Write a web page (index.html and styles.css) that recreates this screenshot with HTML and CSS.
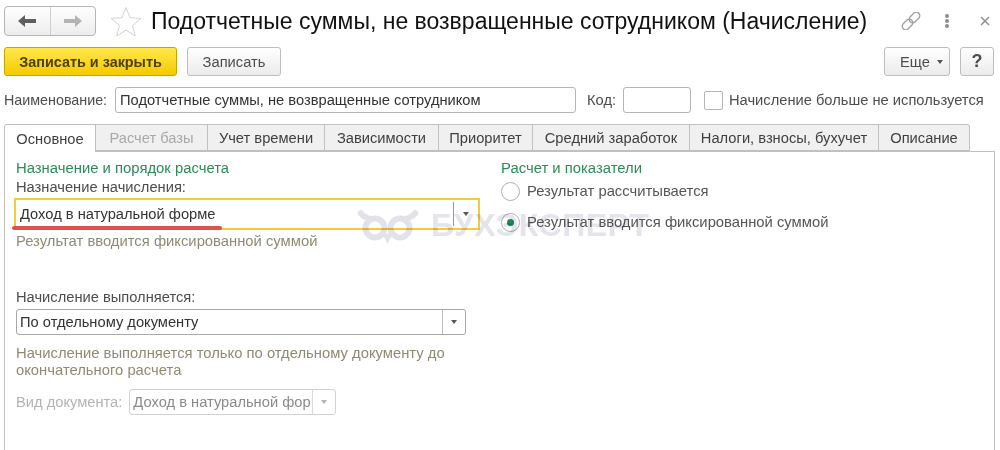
FILE: index.html
```html
<!DOCTYPE html>
<html lang="ru">
<head>
<meta charset="utf-8">
<title>Подотчетные суммы</title>
<link rel="stylesheet" href="styles.css">
</head>
<body>
<div class="page">
  <header class="head">
    <div class="nav">
      <button class="nav-btn nav-first"><svg width="20" height="14" viewBox="0 0 20 14"><path d="M1 7l7-6v4h11v4H8v4z" fill="#5f5f5f"/></svg></button>
      <button class="nav-btn"><svg width="20" height="14" viewBox="0 0 20 14"><path d="M19 7l-7-6v4H1v4h11v4z" fill="#b4b4b4"/></svg></button>
    </div>
    <svg class="star" width="32" height="30" viewBox="0 0 32 30"><path d="M16 1.500l4 10.200 11 .7-8.500 7 2.800 10.600L16 24.100 6.700 30l2.800-10.600L1 12.400l11-.7z" fill="#fff" stroke="#c8c8c8" stroke-width=".8"/></svg>
    <h1 class="title">Подотчетные суммы, не возвращенные сотрудником (Начисление)</h1>
    <div class="head-icons">
      <svg class="link" width="22" height="18" viewBox="0 0 22 18" fill="none" stroke="#a0a0a0" stroke-width="1.400"><rect x="1.500" y="9" width="12" height="7" rx="3.500" transform="rotate(-45 7.500 12.500)"/><rect x="8.500" y="2" width="12" height="7" rx="3.500" transform="rotate(-45 14.500 5.500)"/></svg>
      <span class="dots"><i></i><i></i><i></i></span>
      <svg class="close" width="10" height="10" viewBox="0 0 10 10" stroke="#8f8f8f" stroke-width="1.500"><path d="M1 1l8 8M9 1l-8 8"/></svg>
    </div>
  </header>

  <div class="commands">
    <button class="btn btn-primary">Записать и закрыть</button>
    <button class="btn btn-save">Записать</button>
    <div class="commands-right">
      <button class="btn btn-more">Еще <span class="caret"></span></button>
      <button class="btn btn-help">?</button>
    </div>
  </div>

  <div class="fields">
    <span class="lbl lbl-name">Наименование:</span>
    <div class="input input-name">Подотчетные суммы, не возвращенные сотрудником</div>
    <span class="lbl lbl-code">Код:</span>
    <div class="input input-code"></div>
    <span class="check"></span>
    <span class="lbl">Начисление больше не используется</span>
  </div>

  <nav class="tabs">
    <span class="tab tab-active t1">Основное</span>
    <span class="tab tab-off t2">Расчет базы</span>
    <span class="tab t3">Учет времени</span>
    <span class="tab t4">Зависимости</span>
    <span class="tab t5">Приоритет</span>
    <span class="tab t6">Средний заработок</span>
    <span class="tab t7">Налоги, взносы, бухучет</span>
    <span class="tab t8">Описание</span>
  </nav>

  <main class="panel">
    <section class="col-left">
      <div class="group">Назначение и порядок расчета</div>
      <div class="lbl">Назначение начисления:</div>
      <div class="highlight">
        <div class="select-text">Доход в натуральной форме</div>
        <div class="select-split"><span class="caret"></span></div>
        <span class="underline"></span>
      </div>
      <div class="note">Результат вводится фиксированной суммой</div>
      <div class="lbl lbl-exec">Начисление выполняется:</div>
      <div class="select">
        <div class="select-text">По отдельному документу</div>
        <div class="select-btn"><span class="caret"></span></div>
      </div>
      <div class="note note-exec">Начисление выполняется только по отдельному документу до окончательного расчета</div>
      <div class="doc">
        <span class="doc-lbl">Вид документа:</span>
        <div class="select select-off">
          <div class="select-text">Доход в натуральной фор</div>
          <div class="select-btn"><span class="caret"></span></div>
        </div>
      </div>
    </section>
    <section class="col-right">
      <div class="group">Расчет и показатели</div>
      <div class="radio radio-1"><span class="dot"></span>Результат рассчитывается</div>
      <div class="radio radio-2"><span class="dot dot-on"></span>Результат вводится фиксированной суммой</div>
    </section>
    <div class="mark">
      <svg width="60" height="36" viewBox="0 0 60 36" fill="none" stroke="#e2e2ea" stroke-width="6"><circle cx="17" cy="20" r="9.500"/><circle cx="42" cy="20" r="9.500"/><path d="M1 3c3 5 7 7 12 8M59 3c-3 5-7 7-12 8"/><path d="M29.500 25l-4 3 4 8 4-8z" fill="#e2e2ea" stroke="none"/></svg>
      <span>БУХЭКСПЕРТ</span>
    </div>
  </main>
</div>
</body>
</html>
```
FILE: styles.css
```css
* { box-sizing: border-box; }
html, body { margin: 0; padding: 0; }
body { background: #fff; font-family: "Liberation Sans", Arial, sans-serif; font-size: 14.7px; color: #4d4d4d; }
.page { width: 1000px; height: 450px; overflow: hidden; padding: 6px 5px 0 4px; display: flex; flex-direction: column; }
button { font-family: inherit; margin: 0; }

.head { display: flex; align-items: center; height: 30px; }
.nav { display: flex; width: 92px; height: 30px; border: 1px solid #b5b5b5; border-radius: 4px; background: linear-gradient(#fff, #ececec); flex: none; }
.nav-btn { flex: 1; border: 0; background: none; padding: 0; display: flex; align-items: center; justify-content: center; }
.nav-first { border-right: 1px solid #cfcfcf; }
.star { margin-left: 14px; flex: none; }
.title { margin: 0 0 0 9px; font-size: 23px; font-weight: 400; color: #111; white-space: nowrap; line-height: 30px; }
.head-icons { margin-left: auto; display: flex; align-items: center; padding-right: 5px; flex: none; }
.link { margin-right: 23px; }
.dots { display: flex; flex-direction: column; gap: 1px; margin-right: 31px; }
.dots i { width: 4px; height: 4px; border-radius: 50%; background: #8d8d8d; }
.close { flex: none; }

.commands { display: flex; align-items: center; height: 29px; margin-top: 11px; }
.btn { height: 29px; border: 1px solid #bdbdbd; border-radius: 3px; background: linear-gradient(#fff, #ebebeb); font-size: 14.7px; color: #4d4d4d; padding: 0; }
.btn-primary { width: 173px; border-color: #c9a400; background: linear-gradient(#ffe84d, #f6c900); color: #4f3f00; font-weight: 700; font-size: 14.4px; }
.btn-save { width: 94px; margin-left: 10px; }
.commands-right { margin-left: auto; display: flex; gap: 10px; padding-right: 1px; }
.btn-more { width: 66px; display: flex; align-items: center; gap: 7px; padding-left: 15px; }
.btn-help { width: 34px; font-weight: 700; font-size: 18px; }
.caret { display: inline-block; width: 0; height: 0; border-left: 3.500px solid transparent; border-right: 3.500px solid transparent; border-top: 4px solid #555; }

.fields { display: flex; align-items: center; height: 26px; margin-top: 11px; }
.lbl { line-height: 16px; white-space: nowrap; }
.lbl-name { width: 103px; font-size: 14.3px; flex: none; }
.input { height: 26px; border: 1px solid #b5b5b5; border-radius: 3px; background: #fff; line-height: 24px; padding-left: 4px; color: #333; }
.input-name { width: 461px; margin-left: 8px; flex: none; }
.lbl-code { width: 30px; margin-left: 11px; flex: none; }
.input-code { width: 68px; margin-left: 6px; flex: none; }
.check { width: 19px; height: 19px; margin-left: 13px; margin-right: 6px; border: 1px solid #b5b5b5; border-radius: 2px; flex: none; }

.tabs { display: flex; height: 28px; margin-top: 11px; position: relative; z-index: 1; }
.tab { display: flex; align-items: center; justify-content: center; height: 27px; border: 1px solid #c0c0c0; border-left: 0; background: #f0f0f0; color: #3f3f3f; white-space: nowrap; }
.tab-active { height: 28px; background: #fff; border-left: 1px solid #c0c0c0; border-bottom: 0; border-radius: 3px 0 0 0; }
.tab-off { color: #a9a9a9; }
.t1 { width: 92px; } .t2 { width: 112px; } .t3 { width: 117px; } .t4 { width: 114px; }
.t5 { width: 94px; } .t6 { width: 157px; } .t7 { width: 189px; } .t8 { width: 91px; border-radius: 0 3px 0 0; }

.panel { position: relative; flex: 1; margin-top: -1px; border: 1px solid #c0c0c0; border-bottom: 0; display: flex; padding: 8px 0 0 11px; }
.col-left { width: 464px; flex: none; }
.col-right { margin-left: 21px; }
.group { color: #2e8b57; line-height: 17px; font-size: 14.85px; }
.col-left > .lbl { display: block; line-height: 21px; }
.highlight { position: relative; display: flex; align-items: center; width: 466px; height: 32px; margin: 0 0 0 -2px; border: 2px solid #f3c93f; }
.highlight .select-text { flex: 1; padding-left: 4px; color: #333; }
.select-split { width: 25px; height: 24px; border-left: 1px solid #9a9a9a; display: flex; align-items: center; justify-content: center; }
.underline { position: absolute; left: -4px; bottom: -2px; width: 210px; height: 4px; border-radius: 2px; background: #e0524d; }
.note { color: #8f8a72; line-height: 18px; margin-top: 2px; font-size: 14.8px; }
.col-left > .lbl-exec { margin-top: 37px; line-height: 20px; }
.select { display: flex; align-items: center; height: 26px; width: 450px; margin-top: 2px; border: 1px solid #a8a8a8; border-radius: 3px; background: #fff; }
.select .select-text { flex: 1; padding-left: 3px; color: #333; white-space: nowrap; overflow: hidden; }
.select-btn { width: 23px; height: 100%; border-left: 1px solid #bdbdbd; display: flex; align-items: center; justify-content: center; flex: none; }
.note-exec { margin-top: 10px; width: 450px; line-height: 17px; }
.doc { display: flex; align-items: center; margin-top: 10px; }
.doc-lbl { color: #b3b3b3; white-space: nowrap; }
.select-off { width: 207px; margin: 0 0 0 7px; border-color: #d2d2d2; }
.select-off .select-text { color: #8a8a8a; }
.select-off .select-btn { border-color: #d9d9d9; }
.select-off .caret { border-top-color: #b5b5b5; }
.radio { display: flex; align-items: center; gap: 7px; height: 20px; color: #555; font-size: 14.8px; }
.radio-1 { margin-top: 4px; }
.radio-2 { margin-top: 11px; }
.dot { width: 19px; height: 19px; border: 1px solid #b0b0b0; border-radius: 50%; flex: none; position: relative; }
.dot-on::after { content: ""; position: absolute; left: 5px; top: 5px; width: 7px; height: 7px; border-radius: 50%; background: #1e8a5a; }
.mark { position: absolute; left: 353px; top: 55px; display: flex; align-items: center; gap: 13px; color: #e4e4ec; font-size: 32px; font-weight: 700; letter-spacing: .6px; white-space: nowrap; pointer-events: none; mix-blend-mode: multiply; }
```
